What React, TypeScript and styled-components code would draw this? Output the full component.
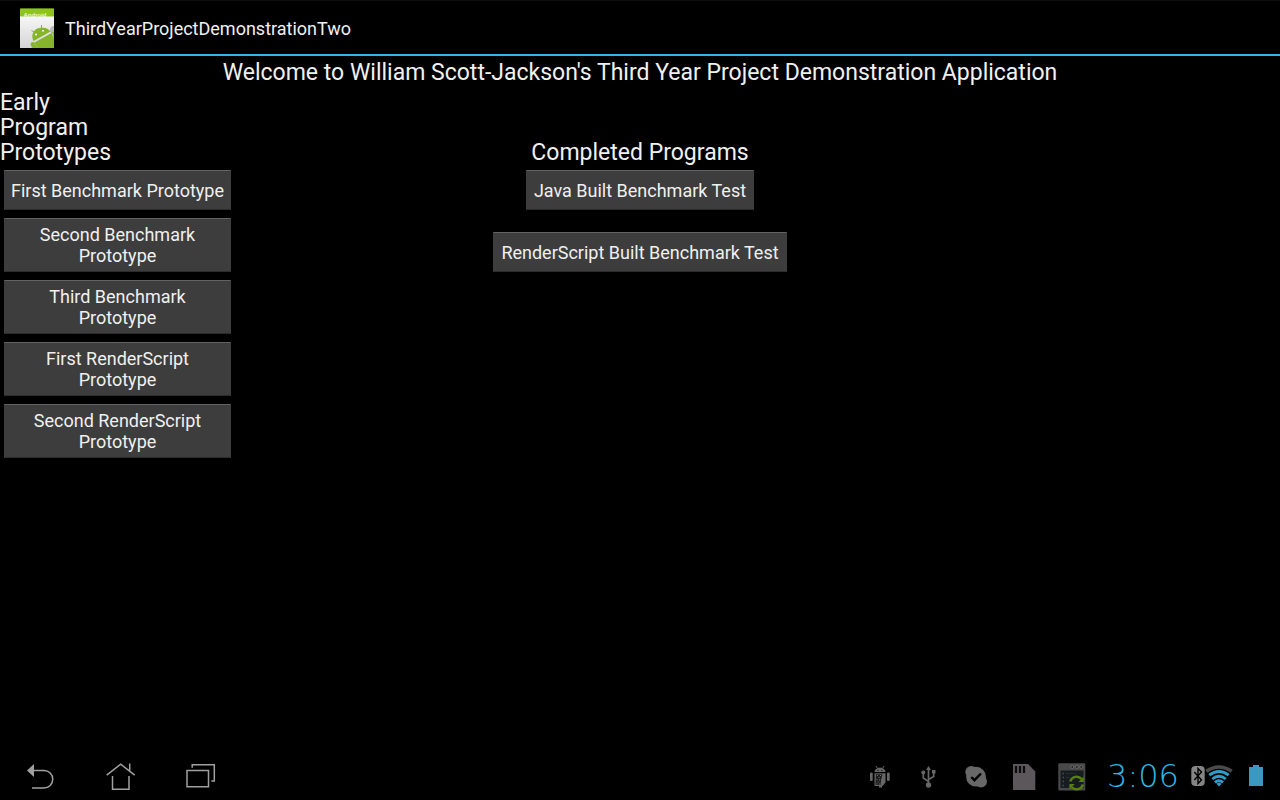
import React from "react";
import styled, { createGlobalStyle } from "styled-components";

const GlobalStyle = createGlobalStyle`
  * { box-sizing: border-box; }
  body {
    margin: 0;
    background: #000;
    color: #f0f0f0;
    font-family: Roboto, "Liberation Sans", sans-serif;
  }
`;

const Screen = styled.div`
  display: flex;
  flex-direction: column;
  min-height: 100vh;
`;

const ActionBar = styled.header`
  display: flex;
  align-items: center;
  gap: 11px;
  height: 56px;
  padding-left: 20px;
  border-top: 1px solid #0c0d0e;
  border-bottom: 2px solid #33b5e5;
`;

const AppTitle = styled.h1`
  margin: 0;
  padding-top: 2px;
  font-size: 18px;
  font-weight: 400;
  line-height: 24px;
`;

const Content = styled.main`
  flex: 1;
  padding-top: 4px;
`;

const Heading = styled.h2<{ $narrow?: boolean }>`
  margin: 0;
  font-size: 23px;
  font-weight: 400;
  line-height: 25px;
  text-align: ${(p) => (p.$narrow ? "left" : "center")};
  width: ${(p) => (p.$narrow ? "120px" : "auto")};
`;

const ProgramTable = styled.div`
  display: grid;
  grid-template-columns: 235px 1fr 235px;
  align-items: end;
  row-gap: 8px;
  padding-top: 5px;
`;

const HeadingCell = styled.div`
  margin-bottom: -3px;
`;

const Cell = styled.div<{ $column: number }>`
  grid-column: ${(p) => p.$column};
  display: flex;
  justify-content: center;
  padding: 0 4px;
`;

const ProgramButton = styled.button<{ $fill?: boolean }>`
  width: ${(p) => (p.$fill ? "100%" : "auto")};
  min-height: 40px;
  padding: 5px ${(p) => (p.$fill ? "4px" : "7px")};
  border: 1px solid #3d3d3d;
  border-top-color: #626262;
  border-bottom-color: #2c2c2c;
  background: #3d3d3d;
  color: #f0f0f0;
  font-family: inherit;
  font-size: 18px;
  line-height: 21px;
  text-align: center;
  white-space: nowrap;
`;

const SystemBar = styled.footer`
  display: flex;
  justify-content: space-between;
  height: 48px;
`;

const Group = styled.div`
  display: flex;
  align-items: center;
`;

const NavButton = styled.button`
  width: 80px;
  height: 48px;
  padding: 0;
  border: 0;
  background: transparent;
  color: #a0a0a0;

  svg { display: block; }
`;

const Clock = styled.time`
  width: 94px;
  color: #33b5e5;
  font-family: "DejaVu Sans", sans-serif;
  font-size: 32px;
  font-weight: 200;
  line-height: 48px;
  text-align: center;
`;

const AppIcon = () => (
  <svg width="34" height="40" viewBox="0 0 34 40" aria-hidden="true">
    <defs>
      <linearGradient id="paper" x1="0" y1="0" x2="0" y2="1">
        <stop offset="0" stopColor="#fff" />
        <stop offset="1" stopColor="#d4d4d4" />
      </linearGradient>
      <clipPath id="sheet"><rect width="34" height="40" /></clipPath>
    </defs>
    <rect y="1" width="34" height="39" fill="url(#paper)" />
    <path d="M1 0H33L34 1V8.500H0V1Z" fill="#8fc31f" />
    <path d="M1 0H33V1H1Z" fill="#587c12" />
    <text x="3.500" y="8.500" fontSize="6" fontWeight="700" fill="#eef6dc" fontFamily="Liberation Sans, sans-serif">Android</text>
    <g clipPath="url(#sheet)">
      <circle cx="34" cy="22" r="4" fill="#b9bbb9" />
      <path d="M13.500 33C10.500 27 13.500 21 19.500 20C25 19 28.500 20.500 30.500 23.500Z" fill="#86b52b" />
      <path d="M14.500 34.500L31.500 25L36 34V42H18.500Z" fill="#86b52b" />
      <path d="M10.500 36.500q0-2.500 2.500-2.500q1.500 0 2 1.500L18 41H12.500Z" fill="#86b52b" />
      <path d="M32 24q2-1 3 1v5h-1Z" fill="#86b52b" />
      <path d="M14 24L11.500 22.500M21.500 20V17" stroke="#86b52b" />
      <circle cx="16" cy="26.500" r="1" fill="#fff" />
      <circle cx="23" cy="22.700" r="1" fill="#fff" />
    </g>
  </svg>
);

const BackIcon = () => (
  <svg width="80" height="48" viewBox="0 0 80 48" aria-hidden="true">
    <path d="M27 18.500L34 12V25Z" fill="currentColor" />
    <path d="M33 18.500H44a8.750 8.750 0 0 1 0 17.500H32" fill="none" stroke="currentColor" strokeWidth="1.500" />
  </svg>
);

const HomeIcon = () => (
  <svg width="80" height="48" viewBox="0 0 80 48" aria-hidden="true">
    <path d="M26.700 23.200L40.700 12.200L54.700 23.200M49.700 11.500V19M32.500 24V37.300H49V24" fill="none" stroke="currentColor" strokeWidth="1.500" />
  </svg>
);

const RecentIcon = () => (
  <svg width="80" height="48" viewBox="0 0 80 48" aria-hidden="true">
    <path d="M27 18.500H48.500V34.700H27ZM32.200 15.800V12.700H54.300V29H51.300" fill="none" stroke="currentColor" strokeWidth="1.500" />
  </svg>
);

const DebugIcon = () => (
  <svg width="48" height="48" viewBox="0 0 48 48" fill="#666" role="img" aria-label="USB debugging">
    <path d="M18.500 20C18.500 17.500 21 15.800 24 15.800S29.500 17.500 29.500 20Z" />
    <path d="M20 14l1.500 2.500M28 14l-1.500 2.500" stroke="#666" />
    <rect x="14" y="20.500" width="2.700" height="8.500" rx="1" />
    <rect x="31" y="20.500" width="2.700" height="8.500" rx="1" />
    <path d="M18.500 21.300H29.500V30.500L26.500 34H26V35.500H23V34H18.500Z" />
    <path d="M20 22.300H26.500L25 28L24.500 33H19.500Z" fill="#1c1c1c" />
    <path d="M21 23.500h1M24 23.500h1M22.500 25.500h1M20.500 27.500h1M23 28h1M21.500 30h1M20.500 32h1M23 32h1" stroke="#777" />
    <circle cx="22" cy="18.300" r=".6" fill="#000" />
    <circle cx="26" cy="18.300" r=".6" fill="#000" />
  </svg>
);

const UsbIcon = () => (
  <svg width="48" height="48" viewBox="0 0 48 48" fill="#666" role="img" aria-label="USB connected">
    <path d="M24.500 33V17M24.500 29.500L19.300 26V21M24.500 27.500L29.700 24.500V20" fill="none" stroke="#666" strokeWidth="1.700" />
    <path d="M24.500 14L27 18H22Z" />
    <circle cx="24.500" cy="33" r="2.700" />
    <circle cx="19.300" cy="20.500" r="2" />
    <rect x="28" y="18" width="3.500" height="3.500" />
  </svg>
);

const SkypeIcon = () => (
  <svg width="48" height="48" viewBox="0 0 48 48" fill="#686868" role="img" aria-label="Skype online">
    <circle cx="24" cy="24.700" r="9.900" />
    <circle cx="19.300" cy="20" r="6" />
    <circle cx="29" cy="29.500" r="6" />
    <path d="M19.300 25L22.500 28.200L29 21.500" fill="none" stroke="#000" strokeWidth="2.400" />
  </svg>
);

const StorageIcon = () => (
  <svg width="48" height="48" viewBox="0 0 48 48" role="img" aria-label="SD card">
    <path d="M13 12H28L35.300 19.500V38H13Z" fill="#5b575b" />
    <path d="M16 14V21M20 14V21M24 14V21" stroke="#0c0c0c" strokeWidth="2.200" />
  </svg>
);

const SyncIcon = () => (
  <svg width="48" height="48" viewBox="0 0 48 48" role="img" aria-label="Sync">
    <rect x="10.300" y="11.300" width="27" height="27.300" rx="1" fill="#494949" />
    <path d="M12.500 18.500H35.500V36H12.500Z" fill="#171c20" />
    <g fill="#2b2b2b" stroke="#707070" strokeWidth=".8">
      <circle cx="24.300" cy="15" r="1.600" />
      <circle cx="28.800" cy="15" r="1.600" />
      <circle cx="33.300" cy="15" r="1.600" />
    </g>
    <path d="M14.500 21.500h1.500M14.500 25.500h1.500M14.500 29.500h1.500M14.500 33.500h1.500" stroke="#484d50" strokeWidth="1.500" />
    <path d="M18 21.500h10M18 25.500h4" stroke="#262c30" />
    <g fill="none" stroke="#587f16" strokeWidth="2.500">
      <path d="M22.300 29.500A6.500 6.500 0 0 1 33.500 27" />
      <path d="M34.900 32.500A6.500 6.500 0 0 1 23.700 35" />
    </g>
    <path d="M35.800 24.500V30H30.500ZM21.400 32H26.700L21.400 37.500Z" fill="#587f16" />
  </svg>
);

const RadioIcons = () => (
  <svg width="90" height="48" viewBox="0 0 90 48" role="img" aria-label="Bluetooth on, Wi-Fi connected, battery full">
    <rect x="1.300" y="14" width="13.400" height="20" rx="4" fill="#858585" />
    <path d="M4.300 20L11.500 28L8 31.500V16.500L11.500 20L4.300 28" fill="none" stroke="#000" strokeWidth="1.400" />
    <g fill="none">
      <path d="M16.300 19.200Q29 10.800 41.700 19.200" stroke="#4b4b4b" strokeWidth="3.600" />
      <path d="M19.300 23.200Q29 16 38.700 23.200M22.300 27Q29 21.500 35.700 27M25 30.500Q29 26.800 33 30.500" stroke="#2d9fca" strokeWidth="2.900" />
    </g>
    <path d="M29 34.500L26.500 31.700Q29 30 31.500 31.700Z" fill="#2d9fca" />
    <path d="M59 15H63V13H69V15H73V34H59Z" fill="#3b98c1" />
  </svg>
);

const prototypes: string[][] = [
  ["First Benchmark Prototype"],
  ["Second Benchmark", "Prototype"],
  ["Third Benchmark", "Prototype"],
  ["First RenderScript", "Prototype"],
  ["Second RenderScript", "Prototype"],
];

const completed = ["Java Built Benchmark Test", "RenderScript Built Benchmark Test"];

export default function App() {
  return (
    <Screen>
      <GlobalStyle />
      <ActionBar>
        <AppIcon />
        <AppTitle>ThirdYearProjectDemonstrationTwo</AppTitle>
      </ActionBar>
      <Content>
        <Heading>Welcome to William Scott-Jackson's Third Year Project Demonstration Application</Heading>
        <ProgramTable>
          <HeadingCell><Heading $narrow>Early Program Prototypes</Heading></HeadingCell>
          <HeadingCell><Heading>Completed Programs</Heading></HeadingCell>
          {prototypes.map((lines, row) => (
            <React.Fragment key={lines[0]}>
              <Cell $column={1}>
                <ProgramButton $fill>
                  {lines.map((line, i) => (
                    <React.Fragment key={line}>{i > 0 && <br />}{line}</React.Fragment>
                  ))}
                </ProgramButton>
              </Cell>
              {completed[row] && (
                <Cell $column={2}><ProgramButton>{completed[row]}</ProgramButton></Cell>
              )}
            </React.Fragment>
          ))}
        </ProgramTable>
      </Content>
      <SystemBar>
        <Group>
          <NavButton aria-label="Back"><BackIcon /></NavButton>
          <NavButton aria-label="Home"><HomeIcon /></NavButton>
          <NavButton aria-label="Recent apps"><RecentIcon /></NavButton>
        </Group>
        <Group>
          <DebugIcon />
          <UsbIcon />
          <SkypeIcon />
          <StorageIcon />
          <SyncIcon />
          <Clock>3:06</Clock>
          <RadioIcons />
        </Group>
      </SystemBar>
    </Screen>
  );
}
